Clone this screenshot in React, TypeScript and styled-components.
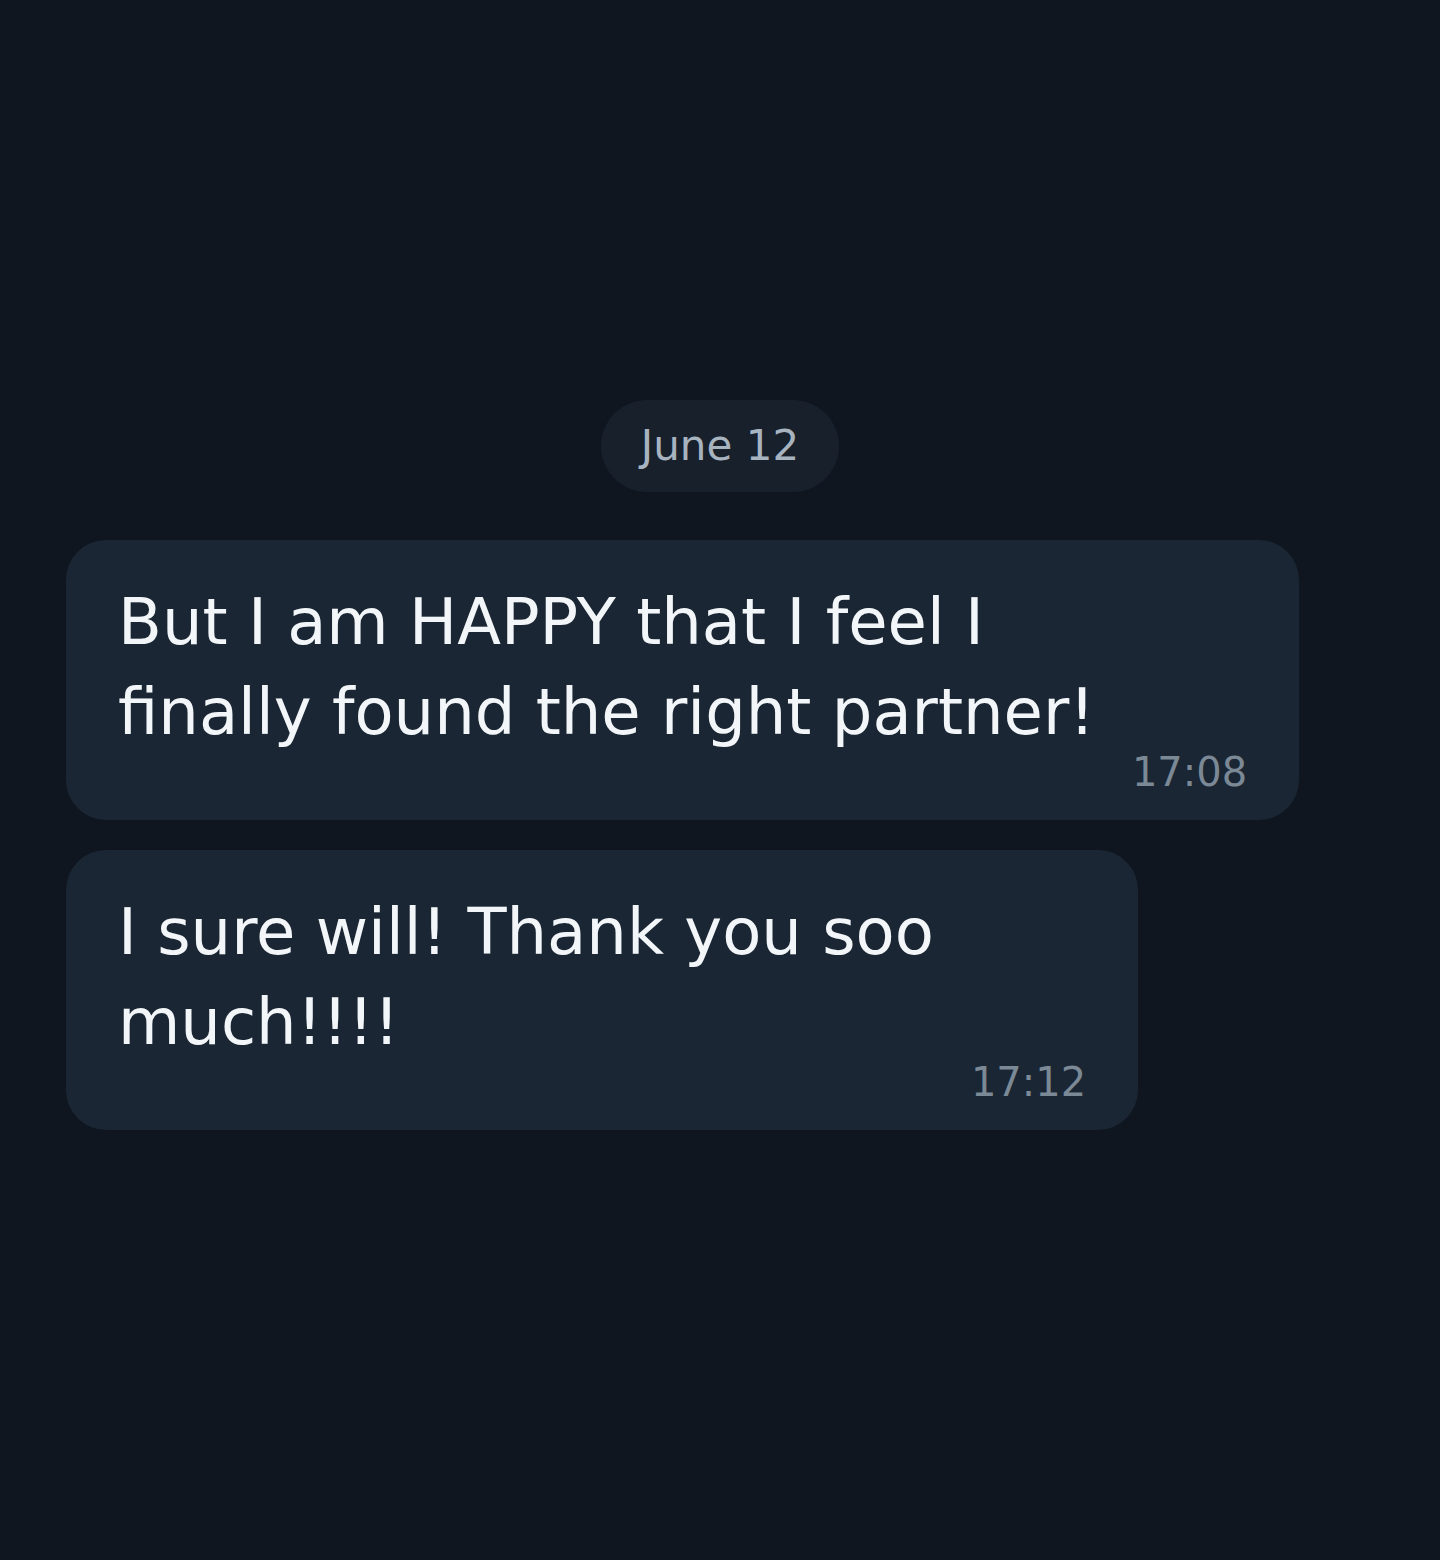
import React from "react";
import styled, { createGlobalStyle } from "styled-components";

const GlobalStyle = createGlobalStyle`
  html, body {
    margin: 0;
    padding: 0;
    background: #0f1620;
  }
  body {
    font-family: "DejaVu Sans", "Noto Sans", sans-serif;
    min-height: 1560px;
  }
`;

const Page = styled.main`
  box-sizing: border-box;
  min-height: 1560px;
  padding: 400px 66px 0;
  display: flex;
  flex-direction: column;
  align-items: flex-start;
  background: #0f1620;
`;

const DatePill = styled.div`
  align-self: center;
  padding: 20px 40px;
  border-radius: 46px;
  background: #17202b;
  color: #a8b3c0;
  font-size: 42px;
  line-height: 52px;
  margin-bottom: 48px;
`;

const Messages = styled.div`
  display: flex;
  flex-direction: column;
  align-items: flex-start;
  gap: 30px;
`;

const Bubble = styled.div`
  display: grid;
  grid-template-columns: auto auto;
  column-gap: 37px;
  width: fit-content;
  padding: 38px 52px 28px;
  border-radius: 40px;
  background: #1a2633;
`;

const Text = styled.div`
  grid-column: 1;
  grid-row: 1;
  color: #f3f6f9;
  font-size: 64px;
  line-height: 89.6px;
  white-space: pre-line;
`;

const Time = styled.div`
  grid-column: 2;
  grid-row: 2;
  justify-self: end;
  margin-top: -5px;
  color: #7b8895;
  font-size: 40px;
  line-height: 40px;
  white-space: nowrap;
`;

const messages = [
  { text: "But I am HAPPY that I feel I\nfinally found the right partner!", time: "17:08" },
  { text: "I sure will! Thank you soo\nmuch!!!!", time: "17:12" },
];

export default function App() {
  return (
    <>
      <GlobalStyle />
      <Page>
        <DatePill>June 12</DatePill>
        <Messages>
          {messages.map((m) => (
            <Bubble key={m.time}>
              <Text>{m.text}</Text>
              <Time>{m.time}</Time>
            </Bubble>
          ))}
        </Messages>
      </Page>
    </>
  );
}
